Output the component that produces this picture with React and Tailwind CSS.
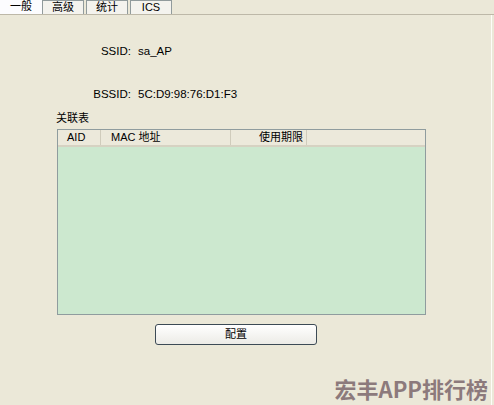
import React from "react";

const font = { fontFamily: '"Liberation Sans", "Noto Sans CJK SC", sans-serif' };

function Tab({ label, active }) {
  return (
    <div
      className={
        active
          ? "h-[15px] w-[42px] flex items-center justify-center bg-[#fcfcfe] text-[11px] leading-none text-black"
          : "h-[14px] w-[42px] flex items-center justify-center border border-b-0 border-[#919b9c] bg-[#f4f3ee] text-[11px] leading-none text-black"
      }
    >
      {label}
    </div>
  );
}

export default function App() {
  return (
    <div
      className="w-[494px] h-[405px] bg-[#ebe8d8] relative overflow-hidden text-[11px] text-black"
      style={font}
    >
      {/* tab strip */}
      <div className="flex items-end h-[15px] border-b border-[#bdb8a8]">
        <Tab label="一般" active />
        <div className="flex gap-[2px]">
          <Tab label="高级" />
          <Tab label="统计" />
          <Tab label="ICS" />
        </div>
      </div>

      {/* info rows */}
      <div className="grid grid-cols-[131px_1fr] gap-x-[7px] gap-y-[26px] mt-[28px] text-[11.5px]">
        <div className="text-right">SSID:</div>
        <div>sa_AP</div>
        <div className="text-right">BSSID:</div>
        <div>5C:D9:98:76:D1:F3</div>
      </div>

      <div className="ml-[56px] mt-[6px]">关联表</div>

      {/* table */}
      <div className="ml-[57px] mt-[3px] w-[369px] h-[186px] border border-[#8f9c9e] bg-[#cce8cf] flex flex-col">
        <div className="h-[17px] flex items-center bg-[#ece9db] border-b-2 border-[#d6d2c2]">
          <div className="w-[43px] h-full flex items-center pl-[9px] border-r border-[#d0ccbc]">AID</div>
          <div className="w-[130px] h-full flex items-center pl-[10px] border-r border-[#d0ccbc]">MAC 地址</div>
          <div className="w-[76px] h-full flex items-center justify-end pr-[3px] border-r border-[#d0ccbc]">使用期限</div>
        </div>
      </div>

      {/* button */}
      <div className="ml-[155px] mt-[9px] w-[162px] h-[21px] rounded-[3px] border border-[#3c4a55] bg-gradient-to-b from-white to-[#ecebe6] flex items-center justify-center">
        配置
      </div>

      {/* watermark */}
      <div
        className="absolute right-[6px] bottom-[6px] text-[22px] font-bold text-[#8c7a7c] leading-none"
        style={{ fontFamily: '"Noto Sans CJK SC", "Liberation Sans", sans-serif' }}
      >
        宏丰APP排行榜
      </div>

      <div className="absolute right-[2px] top-[15px] bottom-0 w-px bg-[#fdfdf8]" />
    </div>
  );
}
